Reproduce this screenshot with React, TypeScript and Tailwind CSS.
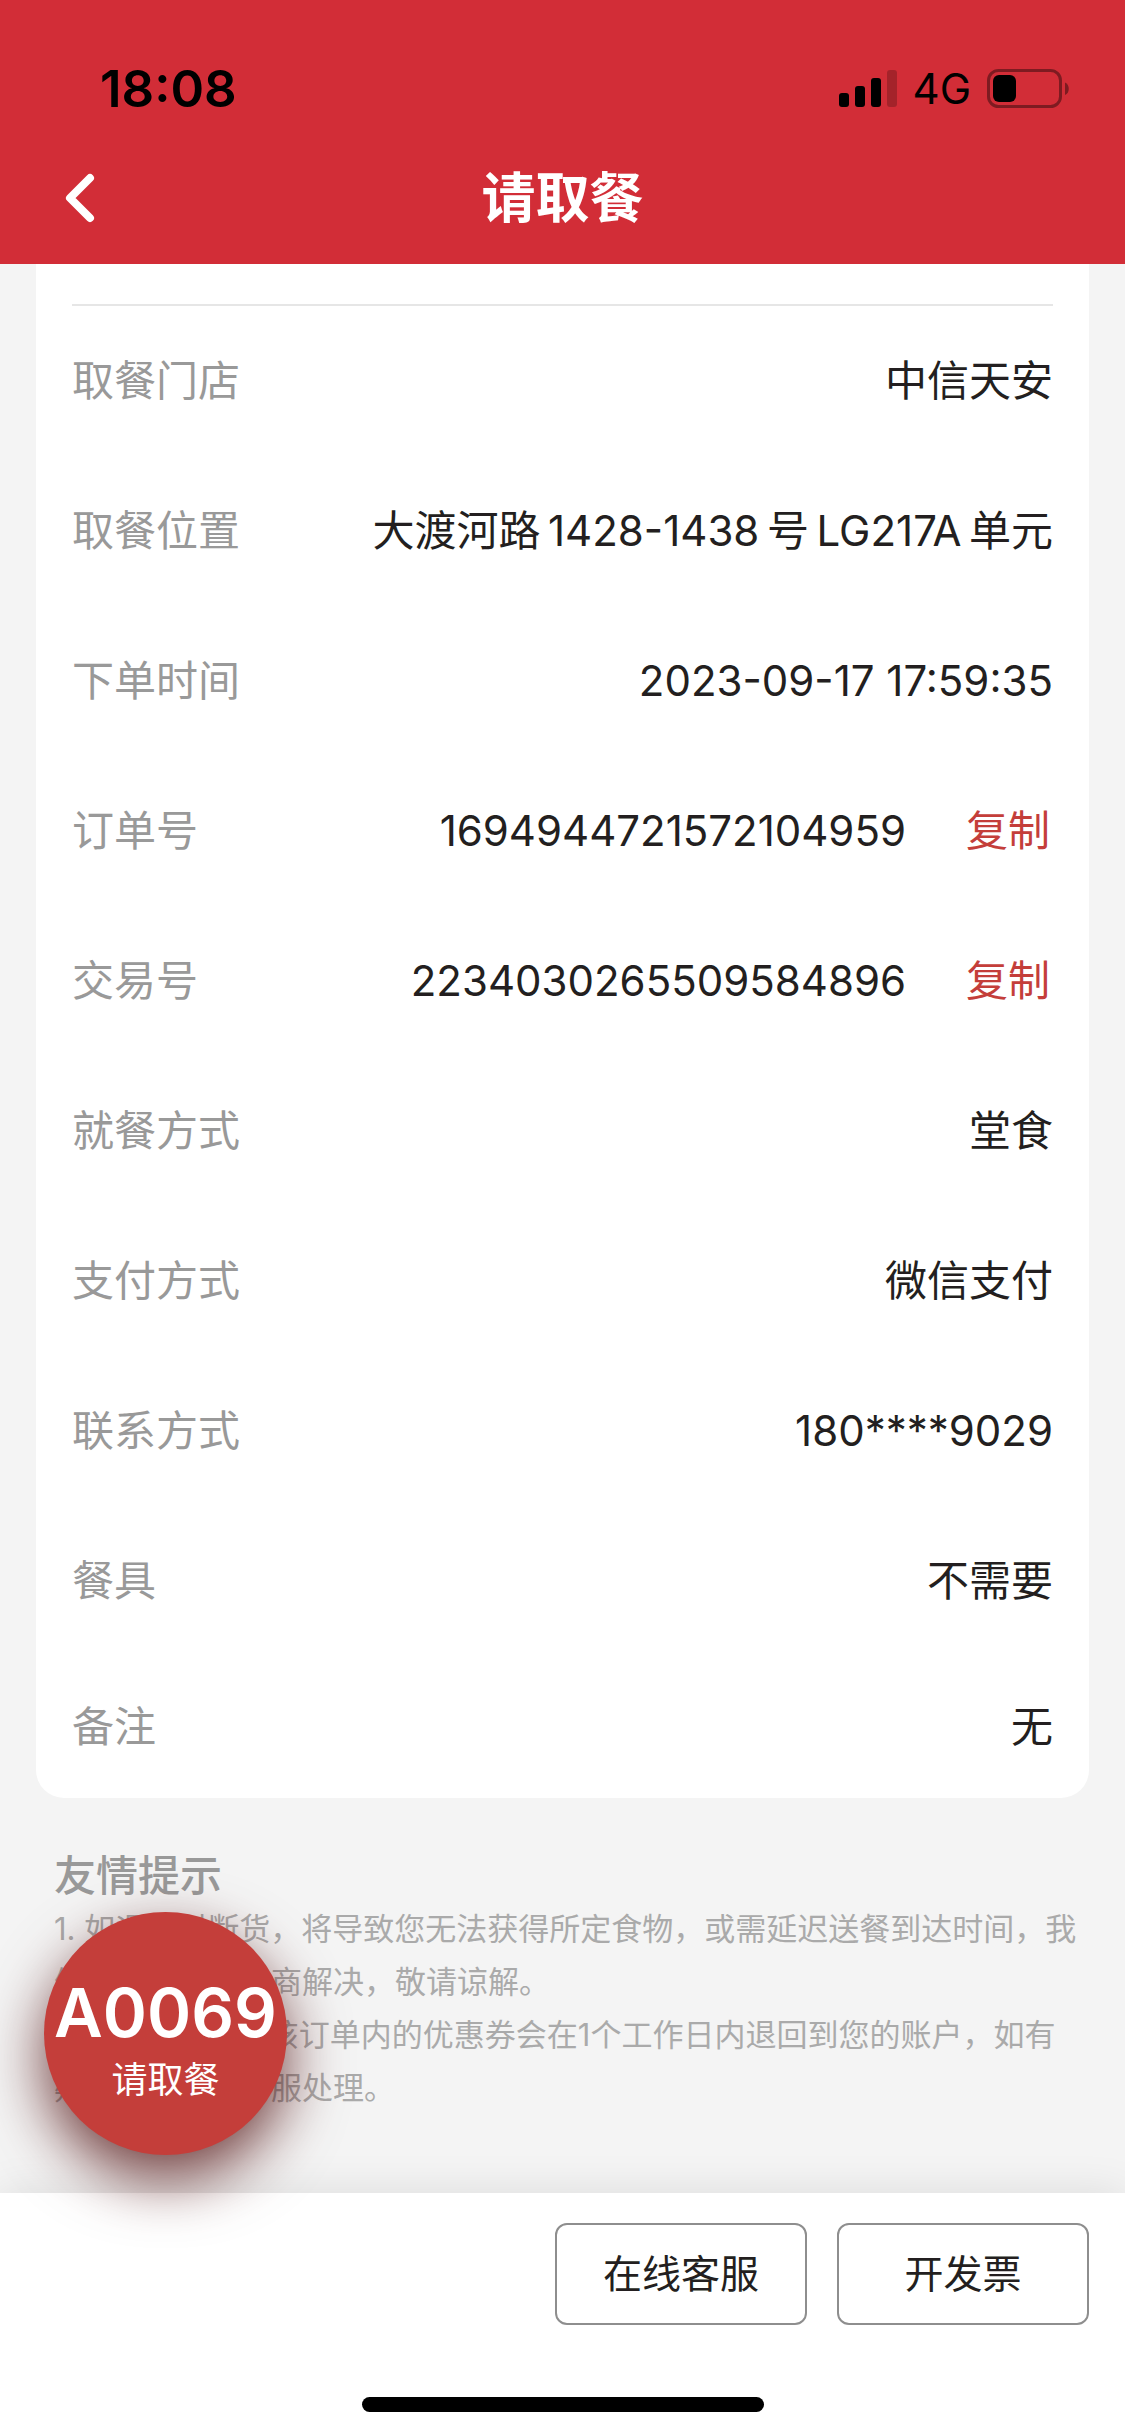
import React from "react";

type Row = { label: string; value: string; copy?: boolean };

const rows: Row[] = [
  { label: "取餐门店", value: "中信天安" },
  { label: "取餐位置", value: "大渡河路\u20091428-1438\u2009号\u2009LG217A\u2009单元" },
  { label: "下单时间", value: "2023-09-17 17:59:35" },
  { label: "订单号", value: "1694944721572104959", copy: true },
  { label: "交易号", value: "2234030265509584896", copy: true },
  { label: "就餐方式", value: "堂食" },
  { label: "支付方式", value: "微信支付" },
  { label: "联系方式", value: "180****9029" },
  { label: "餐具", value: "不需要" },
  { label: "备注", value: "无" },
];

function StatusBar() {
  return (
    <div className="flex items-center justify-between pl-[100px] pr-14 pt-[60px] text-black">
      <time className="text-[51px] leading-[58px] font-semibold">18:08</time>
      <div className="flex items-center">
        <svg className="h-[38px] w-[58px]" viewBox="0 0 58 38" aria-label="信号">
          <rect x="0" y="23" width="10" height="14" rx="3" />
          <rect x="16" y="16" width="10" height="21" rx="3" />
          <rect x="32" y="8" width="10" height="29" rx="3" />
          <rect x="48" y="0" width="10" height="37" rx="3" fillOpacity="0.22" />
        </svg>
        <span className="mx-4 text-[42px] leading-[58px]">4G</span>
        <svg className="h-10 w-[82px]" viewBox="0 0 82 40" aria-label="电量">
          <rect x="1.5" y="1.5" width="72" height="36" rx="10" fill="none" stroke="#000" strokeOpacity="0.4" strokeWidth="3" />
          <rect x="6" y="6" width="23" height="27" rx="6" />
          <path d="M78 13.500c5 1.500 5 11 0 12.500z" fillOpacity="0.4" />
        </svg>
      </div>
    </div>
  );
}

function Header() {
  return (
    <header className="bg-[#d22d37] pb-[30px]">
      <StatusBar />
      <div className="mt-[46px] grid grid-cols-[1fr_auto_1fr] items-center text-white">
        <button type="button" aria-label="返回" className="ml-[60px] w-10 py-2">
          <svg className="h-[54px] w-10" viewBox="0 0 40 54" fill="none" stroke="currentColor" strokeWidth="8" strokeLinecap="round" strokeLinejoin="round">
            <path d="M30 6 L10 26 L30 46" />
          </svg>
        </button>
        <h1 className="text-[54px] leading-[70px] font-bold">请取餐</h1>
      </div>
    </header>
  );
}

function Details() {
  return (
    <section className="mx-9 rounded-b-[28px] bg-white px-9 pt-10">
      <dl className="border-t-2 border-[#e6e6e6] text-[42px] leading-[60px]">
        {rows.map((row) => (
          <div key={row.label} className="flex h-[150px] items-center justify-between last:h-[142px]">
            <dt className="text-[#999999]">{row.label}</dt>
            <dd className="flex items-center text-[#231f20]">
              {row.value}
              {row.copy && (
                <button type="button" className="ml-[60px] pr-[3px] text-[#c43e3a]">
                  复制
                </button>
              )}
            </dd>
          </div>
        ))}
      </dl>
    </section>
  );
}

function Tips() {
  return (
    <section className="pt-[52px] pr-9 pb-[79px] pl-[54px]">
      <h2 className="text-[42px] leading-[52px] font-medium text-[#999999]">友情提示</h2>
      <p className="text-[31px] leading-[53px] text-[#aaaaaa]">
        1. 如遇临时断货，将导致您无法获得所定食物，或需延迟送餐到达时间，我
        <br />
        们将尽快与您协商解决，敬请谅解。
        <br />
        2.如订单取消，该订单内的优惠券会在1个工作日内退回到您的账户，如有
        <br />
        疑问，请联系客服处理。
      </p>
    </section>
  );
}

function PickupBadge() {
  return (
    <button
      type="button"
      className="absolute bottom-[281px] left-[44px] z-10 flex size-[243px] flex-col items-center justify-center rounded-full bg-[#c43e3a] pt-4 text-white shadow-[0_24px_60px_rgba(70,0,0,0.75)]"
    >
      <span className="text-[67px] leading-[72px] font-semibold">A0069</span>
      <span className="mt-1 text-[36px] leading-[54px]">请取餐</span>
    </button>
  );
}

function Footer() {
  return (
    <footer className="flex flex-1 flex-col bg-white shadow-[0_0_40px_rgba(0,0,0,0.1)]">
      <div className="flex justify-end gap-[30px] px-9 pt-[30px]">
        {["在线客服", "开发票"].map((name) => (
          <button
            key={name}
            type="button"
            className="h-[102px] w-[252px] rounded-xl border-2 border-[#8e8e8e] text-[39px] leading-[60px] text-[#231f20]"
          >
            {name}
          </button>
        ))}
      </div>
      <div className="mx-auto mt-auto mb-6 h-[15px] w-[402px] rounded-full bg-black" />
    </footer>
  );
}

export default function App() {
  return (
    <div className="relative flex min-h-screen flex-col bg-[#f4f4f4] font-[Inter,'Noto_Sans_CJK_SC',sans-serif]">
      <Header />
      <main>
        <Details />
        <Tips />
      </main>
      <PickupBadge />
      <Footer />
    </div>
  );
}
